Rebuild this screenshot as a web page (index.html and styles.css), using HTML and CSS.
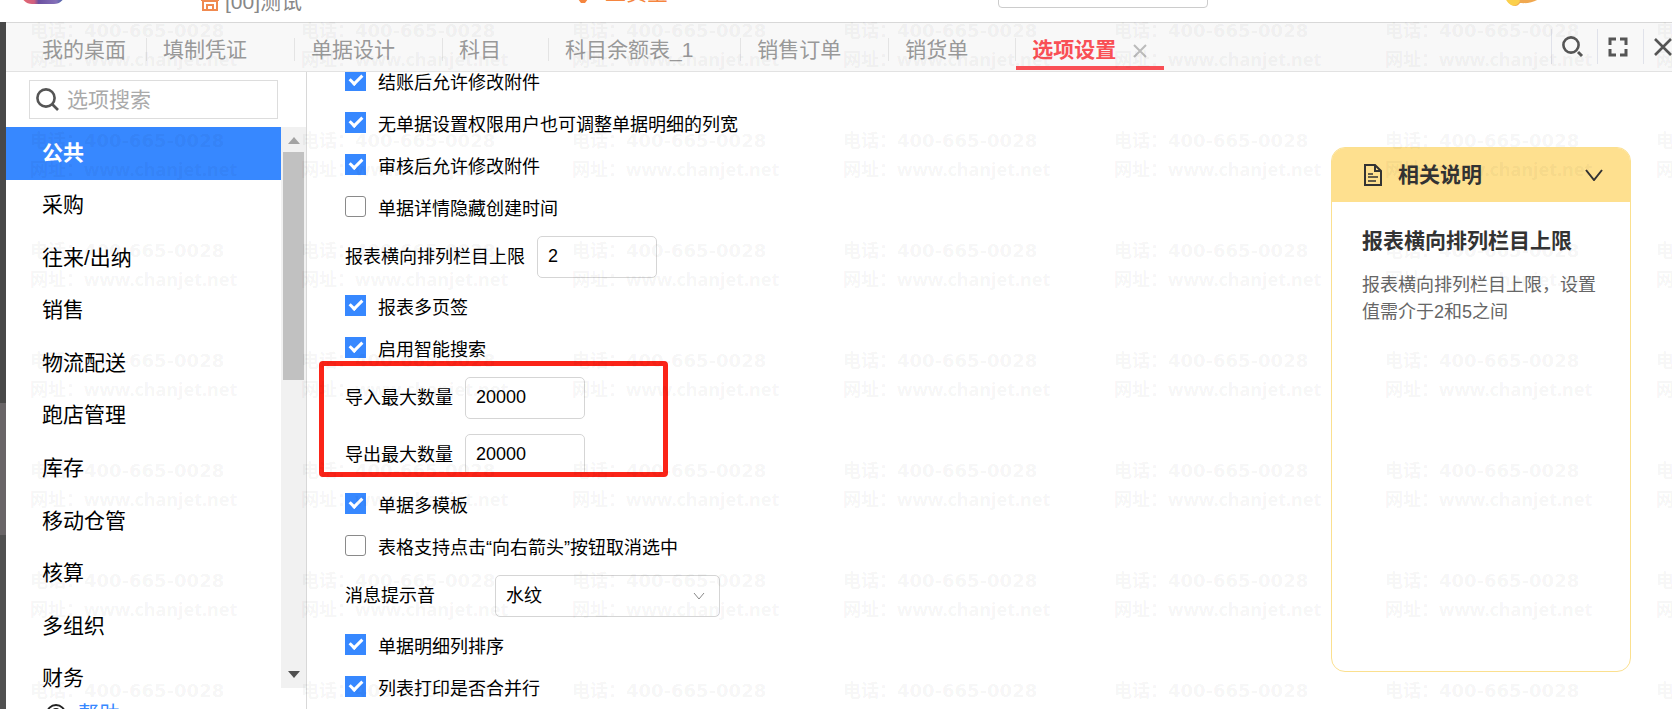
FILE: index.html
```html
<!DOCTYPE html>
<html lang="zh-CN">
<head>
    <meta charset="UTF-8">
    <meta name="viewport" content="width=device-width, initial-scale=1.0">
    <title>选项设置</title>
    <link rel="stylesheet" href="styles.css">
</head>
<body>
    <header class="topbar">
        <svg class="logo" width="44" height="40" viewBox="0 0 44 40">
            <defs>
                <linearGradient id="logoFill" x1="0" x2="1">
                    <stop offset="0" stop-color="#e8686c"/>
                    <stop offset="0.3" stop-color="#cf5f80"/>
                    <stop offset="0.4" stop-color="#6b50a0"/>
                    <stop offset="0.8" stop-color="#8470b8"/>
                    <stop offset="1" stop-color="#3a5fa5"/>
                </linearGradient>
            </defs>
            <rect width="44" height="22" rx="11" fill="url(#logoFill)"/>
        </svg>
        <div class="account">
            <svg width="18" height="18" viewBox="0 0 18 18" fill="none" stroke="#f08a50" stroke-width="2">
                <path d="M2 1h14l1 6H1zM2 7v10h14V7M1 8h16M6 1v7M12 1v7M6 17v-5h6v5"/>
            </svg>
            <span>[00]测试</span>
        </div>
        <div class="product">
            <svg width="16" height="24" viewBox="0 0 16 24"><path d="M3 8h10l3 6-6 8H6l-6-8z" fill="#f5853f"/></svg>
            <span>工贸宝</span>
        </div>
        <input class="top-search" type="text" aria-label="搜索">
        <svg class="mascot" width="44" height="40" viewBox="0 0 44 40">
            <path d="M0 10h40c-3 8-12 12-24 11-2 3-5 4-8 2C5 22 2 18 0 10z" fill="#f0a850"/>
            <path d="M0 12h12l4 7c-2 4-6 6-9 4C4 21 1 18 0 12z" fill="#fbd04c"/>
        </svg>
    </header>

    <div class="frame">
        <div class="edge"></div>
        <div class="app">
            <nav class="tabs">
                <a class="tab home" href="#">我的桌面</a>
                <a class="tab" href="#">填制凭证</a>
                <a class="tab" href="#">单据设计</a>
                <a class="tab" href="#">科目</a>
                <a class="tab" href="#">科目余额表_1</a>
                <a class="tab" href="#">销售订单</a>
                <a class="tab" href="#">销货单</a>
                <div class="tab active">
                    <a href="#">选项设置</a>
                    <button class="tab-close" aria-label="关闭页签">
                        <svg width="14" height="14" viewBox="0 0 14 14" stroke="#bbb" stroke-width="2"><path d="M1 1l12 12M13 1L1 13"/></svg>
                    </button>
                </div>
                <div class="tools">
                    <button class="tool" aria-label="搜索">
                        <svg width="22" height="22" viewBox="0 0 22 22" fill="none" stroke="#555" stroke-width="2.6"><circle cx="9" cy="9" r="7.6"/><path d="M16 16l4 4" stroke-width="3"/></svg>
                    </button>
                    <button class="tool" aria-label="全屏">
                        <svg width="20" height="20" viewBox="0 0 20 20" fill="none" stroke="#555" stroke-width="3"><path d="M2 8V2h6M12 2h6v6M18 12v6h-6M8 18H2v-6"/></svg>
                    </button>
                    <button class="tool last" aria-label="关闭">
                        <svg width="18" height="18" viewBox="0 0 18 18" stroke="#555" stroke-width="2.6"><path d="M1 1l16 16M17 1L1 17"/></svg>
                    </button>
                </div>
            </nav>

            <div class="body">
                <aside class="sidebar">
                    <div class="search">
                        <svg width="23" height="23" viewBox="0 0 23 23" fill="none" stroke="#555" stroke-width="2.6"><circle cx="10" cy="10" r="8.6"/><path d="M16 16l6 6"/></svg>
                        <input type="text" placeholder="选项搜索" aria-label="选项搜索">
                    </div>
                    <div class="menu-wrap">
                        <ul class="menu">
                            <li><a class="selected" href="#">公共</a></li>
                            <li><a href="#">采购</a></li>
                            <li><a href="#">往来/出纳</a></li>
                            <li><a href="#">销售</a></li>
                            <li><a href="#">物流配送</a></li>
                            <li><a href="#">跑店管理</a></li>
                            <li><a href="#">库存</a></li>
                            <li><a href="#">移动仓管</a></li>
                            <li><a href="#">核算</a></li>
                            <li><a href="#">多组织</a></li>
                            <li><a href="#">财务</a></li>
                        </ul>
                        <div class="scrollbar">
                            <svg width="12" height="7" viewBox="0 0 12 7"><path d="M6 0l6 7H0z" fill="#a3a3a3"/></svg>
                            <div class="track"><div class="thumb"></div></div>
                            <svg width="12" height="7" viewBox="0 0 12 7"><path d="M0 0h12L6 7z" fill="#505050"/></svg>
                        </div>
                    </div>
                    <div class="help">
                        <svg width="20" height="20" viewBox="0 0 20 20" fill="none" stroke="#222" stroke-width="2"><circle cx="10" cy="10" r="9"/><path d="M7 8c0-4 6-4 6 0 0 2-3 2-3 5M10 14v2"/></svg>
                        <a href="#">帮助</a>
                    </div>
                </aside>

                <main class="content">
                    <form class="options">
                        <label class="row"><input type="checkbox" checked>结账后允许修改附件</label>
                        <label class="row"><input type="checkbox" checked>无单据设置权限用户也可调整单据明细的列宽</label>
                        <label class="row"><input type="checkbox" checked>审核后允许修改附件</label>
                        <label class="row"><input type="checkbox">单据详情隐藏创建时间</label>
                        <div class="row field">
                            <label for="colLimit">报表横向排列栏目上限</label>
                            <input id="colLimit" type="text" value="2">
                        </div>
                        <label class="row"><input type="checkbox" checked>报表多页签</label>
                        <label class="row"><input type="checkbox" checked>启用智能搜索</label>
                        <div class="limits">
                            <div class="row field">
                                <label for="importMax">导入最大数量</label>
                                <input id="importMax" type="text" value="20000">
                            </div>
                            <div class="row field">
                                <label for="exportMax">导出最大数量</label>
                                <input id="exportMax" type="text" value="20000">
                            </div>
                        </div>
                        <label class="row"><input type="checkbox" checked>单据多模板</label>
                        <label class="row"><input type="checkbox">表格支持点击“向右箭头”按钮取消选中</label>
                        <div class="row field sound">
                            <label for="sound">消息提示音</label>
                            <div class="select">
                                <select id="sound"><option>水纹</option></select>
                                <svg width="12" height="8" viewBox="0 0 12 8" fill="none" stroke="#888"><path d="M1 1l5 6 5-6"/></svg>
                            </div>
                        </div>
                        <label class="row"><input type="checkbox" checked>单据明细列排序</label>
                        <label class="row"><input type="checkbox" checked>列表打印是否合并行</label>
                    </form>

                    <section class="note">
                        <div class="note-head">
                            <svg width="18" height="22" viewBox="0 0 18 22" fill="none" stroke="#333" stroke-width="2"><path d="M1 1h10l6 6v14H1z"/><path d="M11 1v6h6"/><path d="M4 10h5M4 13h10M4 17h8" stroke-width="1.6"/></svg>
                            <h2>相关说明</h2>
                            <button class="fold" aria-label="收起">
                                <svg width="18" height="12" viewBox="0 0 18 12" fill="none" stroke="#333" stroke-width="2"><path d="M1 1l8 10 8-10"/></svg>
                            </button>
                        </div>
                        <div class="note-body">
                            <h3>报表横向排列栏目上限</h3>
                            <p>报表横向排列栏目上限，设置值需介于2和5之间</p>
                        </div>
                    </section>
                </main>
            </div>
        </div>
    </div>

    <div class="watermark" aria-hidden="true"></div>

    <script>
        // fill the page with watermark stamps
        const mark = document.querySelector('.watermark');
        for (let i = 0; i < 49; i++) {
            const stamp = document.createElement('div');
            stamp.innerHTML = '电话：<span class="phone">400-665-0028</span><br>网址：<span>www.chanjet.net</span>';
            mark.appendChild(stamp);
        }
    </script>
</body>
</html>
```

FILE: styles.css
```css
*,
*::before,
*::after {
    box-sizing: border-box;
    margin: 0;
    padding: 0;
}

body {
    display: flex;
    flex-direction: column;
    position: relative;
    height: 100vh;
    overflow: hidden;
    background: #fff;
    color: #000;
    font-family: "Liberation Sans", "Noto Sans CJK SC", sans-serif;
    font-size: 18px;
}

a {
    color: inherit;
    text-decoration: none;
}

button {
    border: 0;
    background: none;
    cursor: pointer;
}

input,
select {
    font: inherit;
    color: inherit;
    outline: 0;
}

svg {
    display: block;
    flex: none;
}

/* top bar, scrolled half out of view */
.topbar {
    display: flex;
    align-items: flex-start;
    flex: none;
    height: 22px;
    padding: 0 124px 0 21px;
    overflow: hidden;
    font-size: 21px;
    line-height: 40px;
}

.topbar > * {
    margin-top: -18px;
}

.account {
    display: flex;
    align-items: center;
    gap: 6px;
    margin-left: 136px;
    color: #888;
}

.topbar .product {
    display: flex;
    align-items: center;
    gap: 14px;
    margin-top: -27px;
    margin-left: 273px;
    color: #f5853f;
}

.top-search {
    width: 210px;
    height: 26px;
    margin-left: auto;
    border: 1px solid #ccc;
    border-radius: 4px;
}

.mascot {
    margin-left: 296px;
}

.frame {
    display: flex;
    flex: 1;
    min-height: 0;
}

.edge {
    flex: none;
    width: 6px;
    background: linear-gradient(#484848 0 381px, #696567 381px 513px, #505050 513px);
}

.app {
    display: flex;
    flex-direction: column;
    flex: 1;
    min-width: 0;
}

/* tabs */
.tabs {
    display: flex;
    flex: none;
    height: 50px;
    padding-left: 20px;
    background: #f8f8f8;
    border-top: 1px solid #d8d8d8;
    border-bottom: 1px solid #e2e2e2;
    color: #999;
    font-size: 21px;
    line-height: 54px;
    white-space: nowrap;
}

.tab {
    position: relative;
    height: 48px;
    padding: 0 48px 0 16px;
}

.tab.home {
    padding-right: 21px;
}

.tab::after {
    content: "";
    position: absolute;
    top: 15px;
    right: 0;
    width: 1px;
    height: 23px;
    background: #e4e4e4;
}

.tab.active {
    display: flex;
    gap: 17px;
    padding-right: 17px;
    color: #f94f55;
    font-weight: bold;
}

.tab.active::after {
    top: auto;
    bottom: 1px;
    left: 0;
    width: auto;
    height: 4px;
    background: #f94f55;
}

.tab-close {
    padding-top: 8px;
}

.tools {
    display: flex;
    align-items: flex-start;
    margin-left: auto;
    padding-top: 6px;
}

.tool {
    display: flex;
    align-items: center;
    width: 46px;
    height: 35px;
    padding-left: 10px;
    border-left: 1px solid #e0e2ea;
}

.tool.last {
    width: 29px;
    overflow: hidden;
}

.body {
    display: flex;
    flex: 1;
    min-height: 0;
}

/* sidebar */
.sidebar {
    display: flex;
    flex-direction: column;
    flex: none;
    width: 301px;
    padding-top: 8px;
    border-right: 1px solid #d8d8d8;
    font-size: 21px;
}

.search {
    display: flex;
    align-items: center;
    flex: none;
    gap: 8px;
    height: 39px;
    margin: 0 28px 8px 23px;
    padding: 0 6px;
    border: 1px solid #ddd;
}

.search input {
    flex: 1;
    min-width: 0;
    border: 0;
}

.search input::placeholder {
    color: #aaa;
}

.menu-wrap {
    display: flex;
    flex: none;
    height: 561px;
    overflow: hidden;
}

.menu {
    display: grid;
    flex: 1;
    height: 578px;
    list-style: none;
}

.menu a {
    display: flex;
    align-items: center;
    height: 100%;
    padding: 0 0 5px 36px;
}

.menu a.selected {
    background: #3788ff;
    color: #fff;
    font-weight: bold;
}

.scrollbar {
    display: flex;
    flex-direction: column;
    align-items: center;
    width: 25px;
    padding: 10px 2px;
    background: #f1f1f1;
}

.track {
    flex: 1;
    width: 100%;
    padding: 8px 0;
}

.thumb {
    width: 100%;
    height: 228px;
    background: #c1c1c1;
}

.help {
    display: flex;
    align-items: center;
    gap: 12px;
    padding: 11px 40px 0;
    color: #3788ff;
    line-height: 30px;
}

/* options */
.content {
    display: flex;
    flex: 1;
    align-items: flex-start;
    justify-content: space-between;
    min-width: 0;
    padding: 0 41px 0 38px;
    overflow: hidden;
}

.options {
    display: flex;
    flex-direction: column;
    margin-top: -12px;
}

.row {
    display: flex;
    align-items: center;
    gap: 12px;
    height: 42px;
    padding-bottom: 1px;
}

.row.field {
    height: 57px;
    padding-bottom: 0;
}

.field label {
    padding-bottom: 3px;
}

.row input[type="checkbox"] {
    appearance: none;
    display: grid;
    place-items: center;
    width: 21px;
    height: 21px;
    border: 1px solid #8a8a8a;
    border-radius: 3px;
    background: #fff;
}

.row input[type="checkbox"]:checked {
    border: 0;
    border-radius: 0;
    background: #3788ff;
}

.row input[type="checkbox"]:checked::after {
    content: "";
    width: 8px;
    height: 13px;
    margin-bottom: 4px;
    border: solid #fff;
    border-width: 0 3px 3px 0;
    transform: rotate(45deg);
}

.row input[type="text"],
.select select {
    height: 42px;
    padding: 0 10px;
    border: 1px solid #d5d5d5;
    border-radius: 5px;
    background: #fff;
}

.row input[type="text"] {
    width: 120px;
}

.row.sound {
    gap: 60px;
}

.select {
    position: relative;
    width: 225px;
}

.select select {
    appearance: none;
    width: 100%;
}

.select svg {
    position: absolute;
    top: 17px;
    right: 15px;
    pointer-events: none;
}

/* red frame drawn over the import/export limits */
.limits {
    position: relative;
}

.limits::after {
    content: "";
    position: absolute;
    top: -8px;
    bottom: 6px;
    left: -26px;
    width: 349px;
    border: 5px solid #fb2418;
    border-radius: 4px;
    pointer-events: none;
}

/* note card */
.note {
    flex: none;
    width: 300px;
    height: 525px;
    margin-top: 75px;
    overflow: hidden;
    border: 1px solid #fbe08f;
    border-radius: 14px;
    color: #333;
}

.note-head {
    display: flex;
    align-items: center;
    gap: 16px;
    height: 54px;
    padding: 0 27px 0 32px;
    background: #fee08f;
}

.note h2,
.note h3 {
    font-size: 21px;
    line-height: 30px;
}

.fold {
    margin-left: auto;
}

.note-body {
    padding: 24px 30px;
}

.note p {
    margin-top: 16px;
    color: #666;
    line-height: 27px;
}

/* watermark */
.watermark {
    position: absolute;
    inset: 22px 0 0 24px;
    display: grid;
    grid-template-columns: repeat(7, 271px);
    grid-auto-rows: 110px;
    overflow: hidden;
    padding-left: 6px;
    color: rgba(0, 0, 0, 0.05);
    font-family: "Noto Sans", "Noto Sans CJK SC", sans-serif;
    font-weight: bold;
    line-height: 29px;
    white-space: nowrap;
    pointer-events: none;
}

.watermark div {
    margin-top: -6px;
}

.watermark .phone {
    font-family: "DejaVu Sans", sans-serif;
}
```
